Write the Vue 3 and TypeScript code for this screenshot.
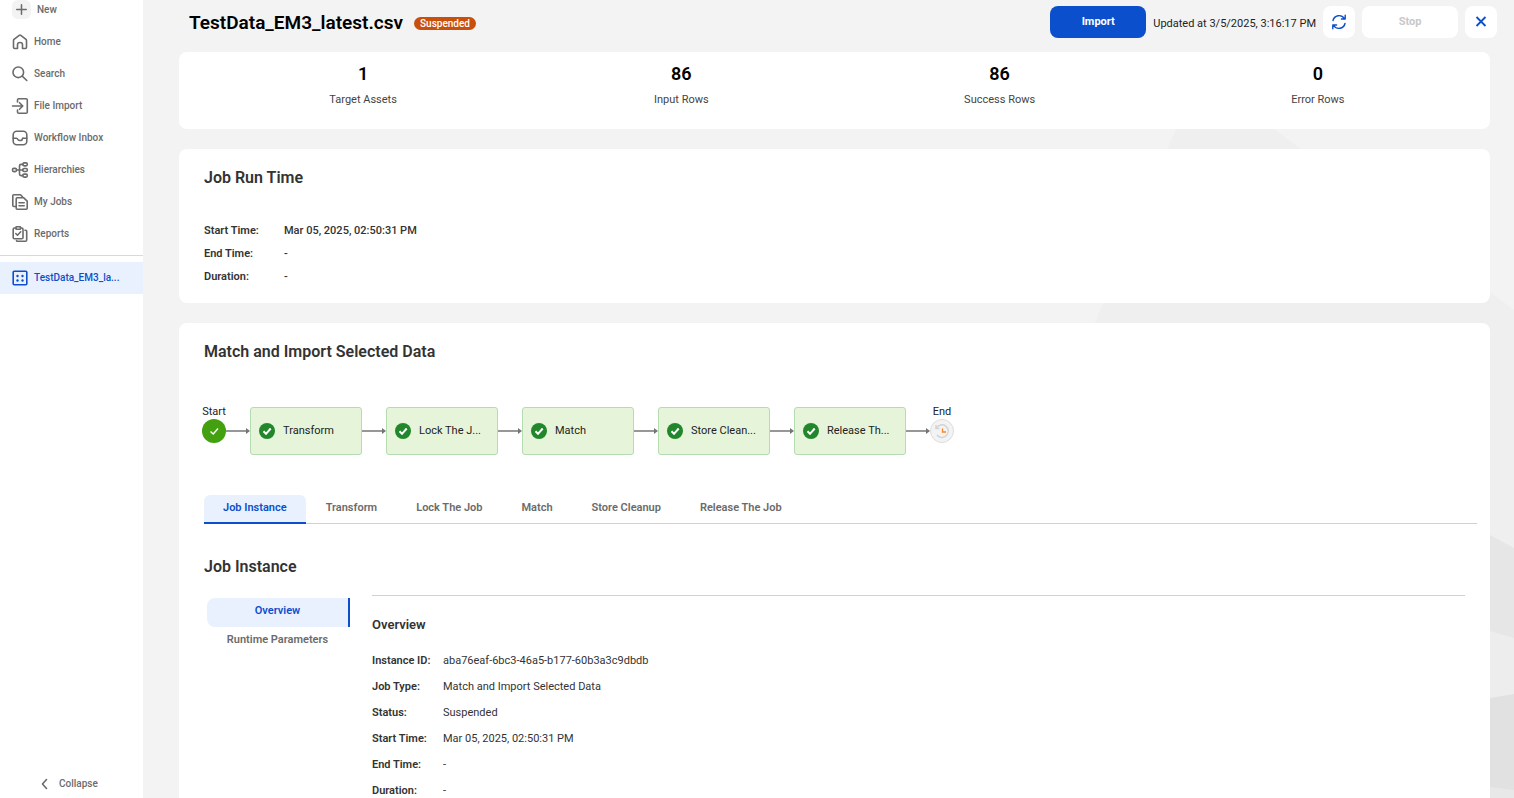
<script setup lang="ts">
import { ref } from 'vue'

interface NavItem { id: string; label: string }
interface Field { label: string; value: string }

const nav: NavItem[] = [
  { id: 'home', label: 'Home' },
  { id: 'search', label: 'Search' },
  { id: 'import', label: 'File Import' },
  { id: 'inbox', label: 'Workflow Inbox' },
  { id: 'hierarchy', label: 'Hierarchies' },
  { id: 'jobs', label: 'My Jobs' },
  { id: 'reports', label: 'Reports' },
]

const stats: Field[] = [
  { value: '1', label: 'Target Assets' },
  { value: '86', label: 'Input Rows' },
  { value: '86', label: 'Success Rows' },
  { value: '0', label: 'Error Rows' },
]

const runTime: Field[] = [
  { label: 'Start Time:', value: 'Mar 05, 2025, 02:50:31 PM' },
  { label: 'End Time:', value: '-' },
  { label: 'Duration:', value: '-' },
]

const steps: string[] = ['Transform', 'Lock The J...', 'Match', 'Store Clean...', 'Release Th...']
const tabs: string[] = ['Job Instance', 'Transform', 'Lock The Job', 'Match', 'Store Cleanup', 'Release The Job']
const activeTab = ref('Job Instance')
const sections: string[] = ['Overview', 'Runtime Parameters']
const activeSection = ref('Overview')

const overview: Field[] = [
  { label: 'Instance ID:', value: 'aba76eaf-6bc3-46a5-b177-60b3a3c9dbdb' },
  { label: 'Job Type:', value: 'Match and Import Selected Data' },
  { label: 'Status:', value: 'Suspended' },
  { label: 'Start Time:', value: 'Mar 05, 2025, 02:50:31 PM' },
  { label: 'End Time:', value: '-' },
  { label: 'Duration:', value: '-' },
]
</script>

<template>
  <div class="app">
    <aside class="sidebar">
      <button type="button" class="new-item">
        <span class="new-icon">
          <svg viewBox="0 0 20 20" class="icon"><path d="M10 5v10M5 10h10" /></svg>
        </span>
        New
      </button>
      <nav>
        <a v-for="item in nav" :key="item.id" href="#" class="nav-item">
          <svg viewBox="0 0 16 16" class="icon">
            <template v-if="item.id === 'home'">
              <path d="M1.500 6.600Q1.500 5.900 2 5.400L7.200 1.300Q8 .700 8.800 1.300L14 5.400Q14.500 5.900 14.500 6.600V13.300Q14.500 14.500 13.300 14.500H10.500V10.700Q10.500 8.500 8 8.500T5.500 10.700V14.500H2.700Q1.500 14.500 1.500 13.300Z" />
            </template>
            <template v-else-if="item.id === 'search'">
              <circle cx="6.300" cy="6.300" r="5.300" /><path d="M10.200 10.200 14.800 14.500" />
            </template>
            <template v-else-if="item.id === 'import'">
              <path d="M5.500 4V2Q5.500 .700 6.800 .700H14Q15.300 .700 15.300 2V14Q15.300 15.300 14 15.300H6.800Q5.500 15.300 5.500 14V12M.500 8H10.800M7.500 4.700 10.800 8 7.500 11.300" />
            </template>
            <template v-else-if="item.id === 'inbox'">
              <rect x="1.200" y="1.200" width="13.600" height="13.600" rx="3.500" />
              <path d="M1.200 8.200H4.500Q5.300 8.200 5.700 9.200T8 10.500T10.300 9.200T11.500 8.200H14.800" />
            </template>
            <template v-else-if="item.id === 'hierarchy'">
              <rect x=".500" y="6.400" width="4" height="3.200" rx="1.300" />
              <rect x="10.800" y=".900" width="4.500" height="3" rx="1.300" />
              <rect x="10.800" y="6.500" width="4.500" height="3" rx="1.300" />
              <rect x="10.800" y="12.100" width="4.500" height="3" rx="1.300" />
              <path d="M4.500 8H10.800M10.800 2.400H9Q7.500 2.400 7.500 4V12Q7.500 13.600 9 13.600H10.800" />
            </template>
            <template v-else-if="item.id === 'jobs'">
              <path d="M3.500 12.500H1.800Q.800 12.500 .800 11.500V1.600Q.800 .700 1.800 .700H8.500L10.500 2.700" />
              <path d="M5.200 3.700H11.500L15.200 7.200V14.300Q15.200 15.300 14.200 15.300H5.200Q4.200 15.300 4.200 14.300V4.700Q4.200 3.700 5.200 3.700ZM7 8.800H12.200M7 11.700H12.200" />
            </template>
            <template v-else>
              <path d="M4 2H2.500Q1.200 2 1.200 3.200V11.700Q1.200 12.700 2.400 12.700H9.800Q11 12.700 11 11.700V3.200Q11 2 9.700 2H8.500" />
              <rect x="4" y=".700" width="4.500" height="2.600" rx=".600" />
              <path d="M3.800 7.500 5.500 9.200 8.700 5.800M13 4.200H13.700Q14.700 4.200 14.700 5.200V14Q14.700 15.300 13.500 15.300H5.500Q4.500 15.300 4.500 14.500" />
            </template>
          </svg>
          {{ item.label }}
        </a>
      </nav>
      <hr class="nav-rule">
      <a href="#" class="nav-item current">
        <svg viewBox="0 0 16 16" class="icon">
          <rect x="1.200" y="1.200" width="13.600" height="13.600" rx="1" />
          <g class="dots">
            <circle cx="5.500" cy="6" r="1.200" /><circle cx="10.500" cy="6" r="1.200" />
            <circle cx="5.500" cy="10.500" r="1.200" /><circle cx="10.500" cy="10.500" r="1.200" />
          </g>
        </svg>
        TestData_EM3_la...
      </a>
      <button type="button" class="collapse">
        <svg viewBox="0 0 16 16" class="icon"><path d="M9.500 3.500 5.500 8l4 4.500" /></svg>
        Collapse
      </button>
    </aside>

    <main class="main">
      <svg class="backdrop" viewBox="0 0 420 798" aria-hidden="true">
        <path d="M90 110H155L420 310V560H0V325Z" fill="#efefef" />
        <path d="M300 480 396 535 420 548V798H300Z" fill="#e6e6e6" />
        <path d="M300 600 396 631 420 638V798H300Z" fill="#ededed" />
        <path d="M300 712 396 698 420 694V798H300Z" fill="#e1e1e1" />
        <path d="M300 776 396 787 420 790V798H300Z" fill="#e8e8e8" />
      </svg>

      <header class="header">
        <h1>TestData_EM3_latest.csv</h1>
        <span class="badge">Suspended</span>
        <div class="actions">
          <button type="button" class="btn primary">Import</button>
          <span class="updated">Updated at 3/5/2025, 3:16:17 PM</span>
          <button type="button" class="btn square" aria-label="Refresh">
            <svg viewBox="0 0 16 16" class="icon thin">
              <path d="M2 6.500A6.200 6.200 0 0 1 13.300 4.500M14.200 1.200V5H10.400M14 9.500A6.200 6.200 0 0 1 2.700 11.500M1.800 14.800V11H5.600" />
            </svg>
          </button>
          <button type="button" class="btn stop" disabled>Stop</button>
          <button type="button" class="btn square" aria-label="Close">
            <svg viewBox="0 0 16 16" class="icon close"><path d="M3.500 3l9 9M12.500 3l-9 9" /></svg>
          </button>
        </div>
      </header>

      <section class="card stats">
        <div v-for="s in stats" :key="s.label" class="stat">
          <strong>{{ s.value }}</strong>
          <span>{{ s.label }}</span>
        </div>
      </section>

      <section class="card">
        <h2>Job Run Time</h2>
        <dl class="fields run-time">
          <div v-for="f in runTime" :key="f.label">
            <dt>{{ f.label }}</dt><dd>{{ f.value }}</dd>
          </div>
        </dl>
      </section>

      <section class="card">
        <h2>Match and Import Selected Data</h2>
        <div class="flow">
          <div class="endpoint">
            <span>Start</span>
            <svg viewBox="0 0 24 24" class="terminal">
              <circle cx="12" cy="12" r="12" fill="#43a00e" />
              <path d="M8.500 12.500 11.200 15 16 9.500" class="tick" />
            </svg>
          </div>
          <template v-for="step in steps" :key="step">
            <svg viewBox="0 0 24 8" class="arrow"><path d="M0 4H21" /><path d="M20 1 24 4 20 7Z" class="head" /></svg>
            <div class="node">
              <svg viewBox="0 0 16 16" class="status">
                <circle cx="8" cy="8" r="8" fill="#22862b" />
                <path d="M4.500 8.300 7 10.800 11.700 5.500" class="tick bold" />
              </svg>
              {{ step }}
            </div>
          </template>
          <svg viewBox="0 0 24 8" class="arrow"><path d="M0 4H21" /><path d="M20 1 24 4 20 7Z" class="head" /></svg>
          <div class="endpoint">
            <span>End</span>
            <svg viewBox="0 0 24 24" class="terminal">
              <circle cx="12" cy="12" r="11.500" fill="#f3f3f3" stroke="#dcdcdc" />
              <path d="M6.500 9A6.300 6.300 0 1 1 7 16M6 6V9.500H9.500" fill="none" stroke="#d4d4d4" stroke-width="1.500" />
              <path d="M12.500 9.500V13H16" fill="none" stroke="#ff8420" stroke-width="1.300" />
            </svg>
          </div>
        </div>

        <div class="tabs" role="tablist">
          <button
            v-for="t in tabs" :key="t" type="button" role="tab" class="tab"
            :class="{ active: t === activeTab }" :aria-selected="t === activeTab" @click="activeTab = t"
          >{{ t }}</button>
        </div>

        <h2 class="sub">Job Instance</h2>
        <div class="detail">
          <div class="sections">
            <button
              v-for="s in sections" :key="s" type="button" class="section-tab"
              :class="{ active: s === activeSection }" @click="activeSection = s"
            >{{ s }}</button>
          </div>
          <div class="panel">
            <h3>Overview</h3>
            <dl class="fields overview">
              <div v-for="f in overview" :key="f.label">
                <dt>{{ f.label }}</dt><dd>{{ f.value }}</dd>
              </div>
            </dl>
          </div>
        </div>
      </section>
    </main>
  </div>
</template>

<style>
body { margin: 0; }
</style>

<style scoped>
* { box-sizing: border-box; }
.app {
  display: flex;
  height: 100vh;
  overflow: hidden;
  background: #f3f3f3;
  color: #333;
  font: 400 11px/14px Roboto, "Liberation Sans", sans-serif;
}
button { font: inherit; color: inherit; border: 0; padding: 0; background: none; cursor: pointer; }
h1, h2, h3, dl, dd { margin: 0; }
.icon { width: 16px; height: 16px; flex: none; fill: none; stroke: currentColor; stroke-width: 1.6; stroke-linecap: round; stroke-linejoin: round; overflow: visible; }

.sidebar { display: flex; flex-direction: column; flex: none; width: 143px; background: #fff; color: #6b6b6b; font-size: 10px; font-weight: 500; }
.new-item { display: flex; align-items: center; gap: 6px; height: 26px; padding: 0 12px 7px; font-weight: 500; }
.new-icon { display: flex; align-items: center; justify-content: center; width: 19px; height: 19px; border-radius: 6px; background: #f3f3f3; }
.new-icon .icon { width: 19px; height: 19px; }
.nav-item { display: flex; align-items: center; gap: 6px; height: 32px; padding: 0 12px; color: inherit; text-decoration: none; white-space: nowrap; }
.nav-rule { width: 100%; height: 1px; margin: 5px 0 6px; border: 0; background: #d9d9d9; }
.current { background: #eaf1fe; color: #0b4fcc; }
.dots { fill: currentColor; stroke: none; }
.collapse { display: flex; align-items: center; gap: 6px; height: 28px; margin-top: auto; padding: 0 37px; font-weight: 500; }

.main { position: relative; flex: 1; min-width: 0; padding: 6px 24px 0 36px; }
.backdrop { position: absolute; top: 0; right: 0; width: 420px; height: 798px; }
.header { position: relative; display: flex; align-items: center; height: 32px; margin: 0 -7px 14px 10px; }
h1 { padding-top: 2px; color: #000; font-size: 19px; line-height: 24px; font-weight: 600; }
.badge { margin: 2px 0 0 11px; padding: 0 6px; border-radius: 7px; background: #c9500c; color: #fff; font-size: 10px; line-height: 13px; font-weight: 500; }
.actions { display: flex; align-items: center; margin-left: auto; gap: 7px; color: #222; }
.updated { padding-top: 3px; }
.btn { display: flex; align-items: center; justify-content: center; height: 32px; border-radius: 8px; background: #fff; font-size: 11px; font-weight: 700; }
.primary, .stop { width: 96px; }
.primary { background: #0b4fcc; color: #fff; }
.square { width: 32px; color: #0b4fcc; }
.stop { color: #c8c8c8; cursor: default; }
.thin { stroke-width: 1.4; }
.close { stroke-width: 1.8; stroke-linecap: butt; }

.card { position: relative; margin-bottom: 20px; padding: 20px 13px 15px 25px; border-radius: 8px; background: #fff; }
.stats { display: grid; grid-template-columns: repeat(4, 1fr); padding-top: 11px; padding-bottom: 22px; }
.stat { display: flex; flex-direction: column; align-items: center; gap: 9px; color: #444; }
.stat strong { color: #000; font-size: 18px; line-height: 21px; font-weight: 600; }
h2 { font-size: 16px; line-height: 18px; font-weight: 600; }
.fields { color: #333; }
.fields div { display: flex; align-items: center; }
.fields dt { flex: none; font-weight: 600; }
.run-time { margin-top: 32px; }
.run-time div { height: 23px; }
.run-time dt { width: 80px; }
.run-time dd { font-weight: 500; }

.flow { display: flex; align-items: center; height: 52px; margin-top: 44px; margin-left: -2px; color: #222; }
.endpoint { display: flex; flex-direction: column; align-items: center; width: 24px; padding-bottom: 14px; }
.terminal { width: 24px; height: 24px; }
.arrow { flex: none; width: 24px; height: 8px; fill: none; stroke: #757575; stroke-width: 1.5; }
.head { fill: #757575; stroke: none; }
.node { display: flex; align-items: center; gap: 8px; width: 112px; height: 48px; padding: 0 8px; border: 1px solid #b4dcb0; border-radius: 3px; background: #e6f5da; white-space: nowrap; }
.status { width: 16px; height: 16px; flex: none; }
.tick { fill: none; stroke: #fff; stroke-width: 1.4; }
.bold { stroke-width: 2; }

.tabs { display: flex; gap: 1px; height: 29px; margin-top: 38px; border-bottom: 1px solid #d0d0d0; }
.tab { height: 29px; padding: 0 19px 2px; border-bottom: 2px solid transparent; border-radius: 6px 6px 0 0; color: #6b6b6b; font-size: 11px; font-weight: 600; }
.active { background: #eaf1fe; color: #0b4fcc; }
.tab.active { border-bottom-color: #0b4fcc; color: #0b4fcc; }
.sub { margin-top: 34px; }
.detail { display: flex; margin-top: 19px; }
.sections { display: flex; flex-direction: column; width: 143px; margin: 3px 22px 0 3px; }
.section-tab { height: 29px; padding-bottom: 3px; border-right: 2px solid transparent; border-radius: 8px 0 0 8px; color: #6b6b6b; font-size: 11px; font-weight: 600; }
.section-tab.active { border-right-color: #0b4fcc; color: #0b4fcc; }
.panel { flex: 1; margin-right: 12px; padding-top: 21px; border-top: 1px solid #d0d0d0; }
h3 { font-size: 13px; line-height: 16px; font-weight: 600; }
.overview { margin-top: 15px; }
.overview div { height: 26px; }
.overview dt { width: 71px; }
</style>
